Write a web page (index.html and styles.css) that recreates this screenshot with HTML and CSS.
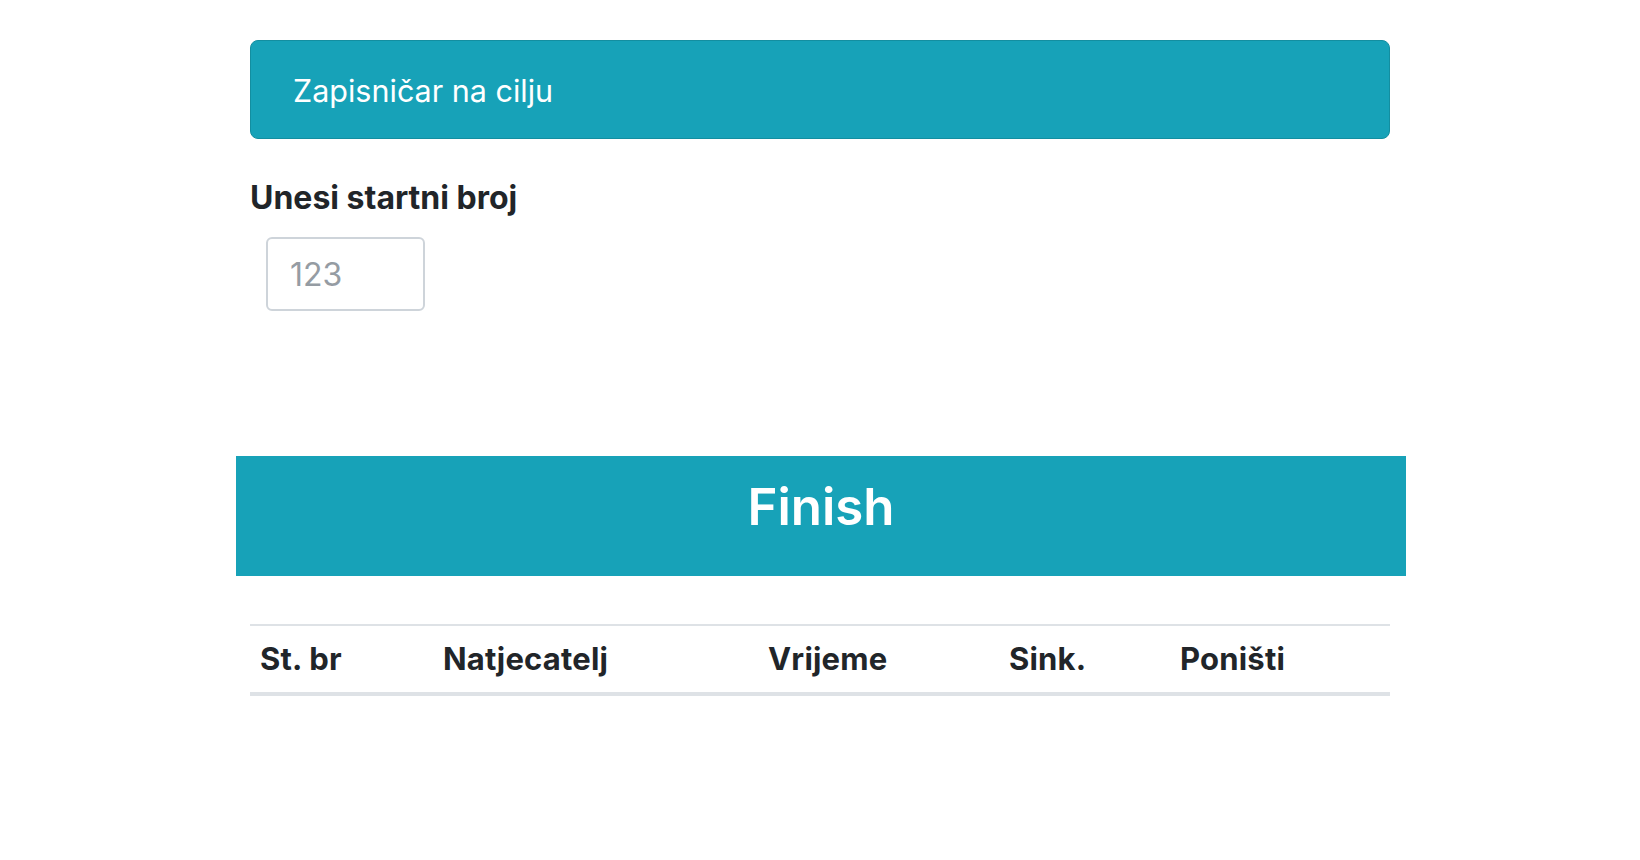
FILE: index.html
```html
<!DOCTYPE html>
<html lang="hr">
<head>
    <meta charset="UTF-8">
    <meta name="viewport" content="width=device-width, initial-scale=1.0">
    <link rel="stylesheet" href="styles.css">
    <title>Zapisničar na cilju</title>
</head>
<body>

    <div class="container">
        <div class="alert-info">Zapisničar na cilju</div>

        <label class="number-label" for="startNumber">Unesi startni broj</label>
        <input id="startNumber" class="number-input" type="text" placeholder="123">

        <div class="finish-bar">
            <h1 class="finish-title">Finish</h1>
        </div>

        <table class="results">
            <thead>
                <tr>
                    <th class="col-number">St. br</th>
                    <th class="col-name">Natjecatelj</th>
                    <th class="col-time">Vrijeme</th>
                    <th class="col-sync">Sink.</th>
                    <th class="col-undo">Poništi</th>
                </tr>
            </thead>
            <tbody></tbody>
        </table>
    </div>

</body>
</html>
```

FILE: styles.css
```css
* {
    margin: 0;
    padding: 0;
    box-sizing: border-box;
}

body {
    font-family: Inter, "Noto Sans", "Liberation Sans", sans-serif;
    color: #212529;
    background-color: white;
}

.container {
    width: 1140px;
    margin: 0 auto;
    padding-top: 40px;
    display: flex;
    flex-direction: column;
    align-items: flex-start;
}

.alert-info {
    width: 100%;
    height: 99px;
    display: flex;
    align-items: center;
    padding: 2px 42px 0;
    border: 1.5px solid #138ea0;
    border-radius: 8px;
    background-color: #17a2b8;
    color: white;
    font-size: 30.5px;
}

.number-label {
    margin-top: 40px;
    font-size: 32px;
    line-height: 38px;
    font-weight: 700;
}

.number-input {
    margin-top: 20px;
    margin-left: 16px;
    width: 159px;
    height: 74px;
    padding: 0 22px;
    border: 2px solid #ced4da;
    border-radius: 6px;
    font-family: inherit;
    font-size: 32px;
    color: #495057;
}
.number-input::placeholder {
    color: #959ca3;
}
.number-input:focus {
    outline: none;
}

.finish-bar {
    align-self: stretch;
    margin: 145px -16px 0 -14px;
    height: 120px;
    padding-top: 20px;
    background-color: #17a2b8;
    color: white;
    text-align: center;
}
.finish-title {
    font-size: 51px;
    line-height: 61px;
    font-weight: 600;
}

.results {
    width: 100%;
    margin-top: 48px;
    border-collapse: collapse;
}
.results th {
    padding: 12px 10px;
    font-size: 31px;
    line-height: 42px;
    font-weight: 700;
    letter-spacing: 0.2px;
    text-align: left;
    border-top: 2px solid #dee2e6;
    border-bottom: 4px solid #dee2e6;
}
.col-number { width: 183px; }
.col-name { width: 325px; }
.col-time { width: 241px; }
.col-sync { width: 171px; }
.col-undo { width: 220px; }
```
